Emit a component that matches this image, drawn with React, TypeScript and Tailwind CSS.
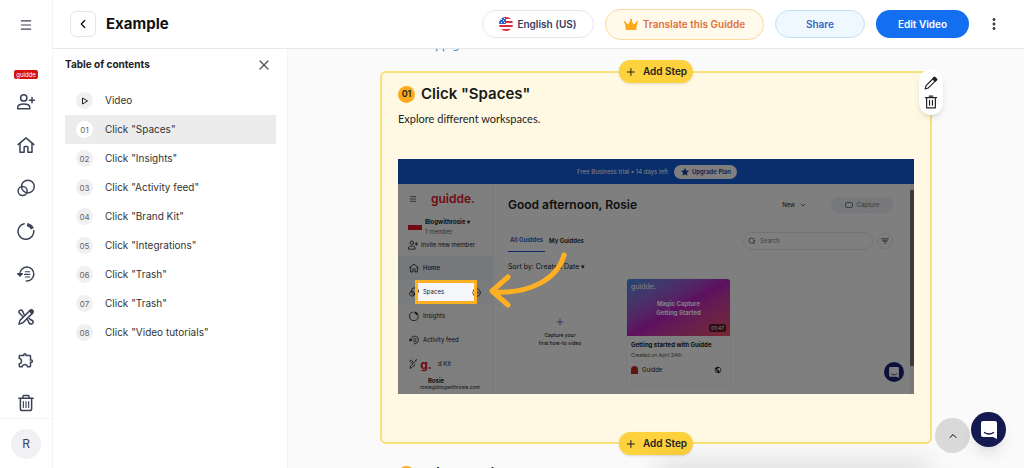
import type { ReactNode } from "react";
import { ChevronDown, ChevronLeft, ChevronUp, CirclePlus, Menu, Plus, Search, X } from "lucide-react";
import { MdMoreVert, MdOutlineExtension, MdStar, MdFilterList, MdPublic } from "react-icons/md";

const steps = [
  'Click "Spaces"',
  'Click "Insights"',
  'Click "Activity feed"',
  'Click "Brand Kit"',
  'Click "Integrations"',
  'Click "Trash"',
  'Click "Trash"',
  'Click "Video tutorials"',
];

const pad = (n: number) => String(n).padStart(2, "0");

function Line({ children, className = "size-[18px]" }: { children: ReactNode; className?: string }) {
  return (
    <svg
      viewBox="0 0 24 24"
      fill="none"
      stroke="currentColor"
      strokeWidth="2"
      strokeLinecap="round"
      strokeLinejoin="round"
      className={className}
      aria-hidden="true"
    >
      {children}
    </svg>
  );
}

const UserAddIcon = ({ className }: { className?: string }) => (
  <Line className={className}>
    <circle cx="9" cy="6.5" r="4.2" />
    <path d="M1 21v-2c0-3 3.600-4.500 8-4.500s8 1.500 8 4.500v2z" />
    <path d="M20 6v7M16.500 9.500h7" />
  </Line>
);

const HomeIcon = ({ className }: { className?: string }) => (
  <Line className={className}>
    <path d="M1.500 11.500 12 2.500l10.500 9" />
    <path d="M4 9.500V21.500h5.500V15a1 1 0 0 1 1-1h3a1 1 0 0 1 1 1v6.500H20V9.500" />
  </Line>
);

const SpacesIcon = ({ className }: { className?: string }) => (
  <Line className={className}>
    <circle cx="14.500" cy="10" r="8.500" />
    <circle cx="7.500" cy="16" r="6" />
  </Line>
);

const InsightsIcon = ({ className }: { className?: string }) => (
  <Line className={className}>
    <path d="M9.500 2.300A10.500 10.500 0 1 0 22.300 11.500" />
    <path d="M13.500 3.500a9.500 9.500 0 0 1 7 5.500" strokeWidth="4.500" strokeLinecap="butt" />
  </Line>
);

const ActivityIcon = ({ className }: { className?: string }) => (
  <Line className={className}>
    <path d="M4 12a9.200 9.200 0 1 1 8.500 9.200" />
    <path d="M1 11.500h6l-3 3z" fill="currentColor" />
    <path d="M11 9h6M10 12.500h7M11 16h6" strokeWidth="1.500" />
  </Line>
);

const BrandIcon = ({ className }: { className?: string }) => (
  <Line className={className}>
    <path d="M2.500 21.500 4 16.500 17.500 3a2.500 2.500 0 0 1 3.500 3.500L7.500 20z" />
    <path d="m16.500 4 3.500 3.500 1.500-3-2-2z" fill="currentColor" />
    <path d="M9.500 8.500C8 7 8.500 5 7 3.500S3 3 2.500 4.500s1 2.500 2 3.500 2 2 3 3" />
    <path d="M14 15.500c1.500 1.500 1 3.500 2.500 5s4.500 1 5-1-1-3-2.500-3.500-2-1.500-2.500-2" />
  </Line>
);

const TrashIcon = ({ className }: { className?: string }) => (
  <Line className={className}>
    <path d="M2.500 5.500h19M8 5V3a1 1 0 0 1 1-1h6a1 1 0 0 1 1 1v2" />
    <path d="M4.500 6v13.500a2.500 2.500 0 0 0 2.500 2.500h10a2.500 2.500 0 0 0 2.500-2.500V6" />
    <path d="M8.500 10v8M12 10v8M15.500 10v8" strokeWidth="1.500" />
  </Line>
);

const navItems = [
  { label: "Invite", icon: <UserAddIcon /> },
  { label: "Home", icon: <HomeIcon /> },
  { label: "Spaces", icon: <SpacesIcon /> },
  { label: "Insights", icon: <InsightsIcon /> },
  { label: "Activity feed", icon: <ActivityIcon /> },
  { label: "Brand Kit", icon: <BrandIcon /> },
  { label: "Integrations", icon: <MdOutlineExtension className="size-[18px]" /> },
  { label: "Trash", icon: <TrashIcon /> },
];

function Sidebar() {
  return (
    <aside className="flex w-[53px] shrink-0 flex-col items-center border-r border-gray-100 bg-white text-[#3c4257]">
      <button aria-label="Menu" className="flex h-[49px] w-full items-center justify-center">
        <Menu className="size-[14px]" />
      </button>
      <span className="mt-[21px] rounded-xs bg-[#d5100f] px-0.5 text-[6px] leading-[9px] text-white">guidde</span>
      <nav className="mt-[14px] flex flex-col gap-[25px]">
        {navItems.map((item) => (
          <button key={item.label} aria-label={item.label} className="block">
            {item.icon}
          </button>
        ))}
      </nav>
      <div className="mt-auto flex h-[50px] w-full items-center justify-center border-t border-gray-100">
        <button className="size-[30px] rounded-full bg-[#f1f1f5] text-xs">R</button>
      </div>
    </aside>
  );
}

function UsFlag() {
  return (
    <svg viewBox="0 0 14 14" className="size-[14px] rounded-full" aria-hidden="true">
      <path fill="#fff" d="M0 0h14v14H0z" />
      <path fill="#e0293c" d="M0 0h14v2H0zM0 4h14v2H0zM0 8h14v2H0zM0 12h14v2H0z" />
      <path fill="#2f62c9" d="M0 0h7v7H0z" />
      <path fill="#fff" d="M2 2h1v1H2zM4 3h1v1H4zM2 5h1v1H2zM5 5h1v1H5zM5 1h1v1H5z" />
    </svg>
  );
}

function Header() {
  return (
    <header className="z-10 flex h-[49px] shrink-0 items-center border-b border-gray-200 bg-white pr-[21px] pl-[17px]">
      <button
        aria-label="Back"
        className="flex size-[26px] items-center justify-center rounded-md border border-gray-200"
      >
        <ChevronLeft className="size-[14px]" />
      </button>
      <h1 className="ml-[10px] text-[15px] font-bold text-[#111]">Example</h1>
      <div className="ml-auto flex items-center gap-[11px] text-[10px] font-semibold">
        <button className="flex h-7 w-28 items-center justify-center gap-1 rounded-full border border-gray-200 text-[#3a3a5c]">
          <UsFlag />
          English (US)
        </button>
        <button className="flex h-[31px] w-[159px] items-center justify-center gap-[5px] rounded-full border border-[#f8d79b] bg-[#fffaec] text-[#e2703a]">
          <svg viewBox="0 0 14 11" className="h-[11px] w-[14px]" fill="#fba819" aria-hidden="true">
            <path d="M2 11 .8 4.200a1 1 0 1 1 1-.6L4.300 5.600 6.300 2a1.200 1.200 0 1 1 1.400 0l2 3.600 2.500-2a1 1 0 1 1 1 .6L12 11z" />
          </svg>
          Translate this Guidde
        </button>
        <button className="h-7 w-[90px] rounded-full border border-[#c9e3f3] bg-[#eef8fe] text-[#3566c4]">Share</button>
        <button className="h-7 w-[93px] rounded-full bg-[#146ef0] text-white">Edit Video</button>
        <button aria-label="More" className="ml-[5px]">
          <MdMoreVert className="size-[18px] text-[#444]" />
        </button>
      </div>
    </header>
  );
}

function Contents() {
  return (
    <section className="flex w-[235px] shrink-0 flex-col border-r border-gray-100 bg-white pr-[11px] pl-3">
      <div className="flex h-[31px] items-center justify-between pr-1 text-[#222]">
        <h2 className="text-[10px] font-bold">Table of contents</h2>
        <button aria-label="Close">
          <X className="size-4 text-[#555]" />
        </button>
      </div>
      <ul className="mt-[6px] text-[10px] text-[#333]">
        <li>
          <a href="#video" className="flex h-[29px] items-center gap-3 pl-[11px]">
            <span className="flex size-[17px] items-center justify-center rounded-full bg-[#f0f0f1]">
              <svg viewBox="0 0 8 8" className="size-2" fill="none" stroke="#222" strokeLinejoin="round">
                <path d="M1.500 1v6l5-3z" />
              </svg>
            </span>
            Video
          </a>
        </li>
        {steps.map((title, i) => (
          <li key={i}>
            <a
              href={`#step-${i + 1}`}
              className={`flex h-[29px] items-center gap-3 pl-[11px] ${i === 0 ? "bg-[#ececed]" : ""}`}
            >
              <span
                className={`flex size-[17px] items-center justify-center rounded-full text-[8px] text-[#666] ${
                  i === 0 ? "bg-white" : "bg-[#f0f0f1]"
                }`}
              >
                {pad(i + 1)}
              </span>
              {title}
            </a>
          </li>
        ))}
      </ul>
    </section>
  );
}

const appNav = [
  { label: "Home", icon: <HomeIcon className="size-[10px]" /> },
  { label: "Spaces", icon: <SpacesIcon className="size-[10px]" /> },
  { label: "Insights", icon: <InsightsIcon className="size-[10px]" /> },
  { label: "Activity feed", icon: <ActivityIcon className="size-[10px]" /> },
];

function ChatIcon({ className }: { className?: string }) {
  return (
    <svg viewBox="0 0 16 18" className={className} aria-hidden="true">
      <path fill="#fff" d="M2 0h12a2 2 0 0 1 2 2v16l-4-2H2a2 2 0 0 1-2-2V2a2 2 0 0 1 2-2z" />
      <path d="M3.500 11.500c2.500 2 6.500 2 9 0" fill="none" stroke="#14194f" strokeWidth="1.300" strokeLinecap="round" />
    </svg>
  );
}

/* Dimmed capture of the app with the clicked menu item lit up */
function Capture() {
  return (
    <figure className="relative flex aspect-[516/235] flex-col overflow-hidden bg-white text-[6px] leading-[10px] text-[#222]">
      <div className="flex h-[25px] shrink-0 items-center justify-center gap-[6px] bg-[#145ad6] pl-[2px] text-white">
        Free Business trial • 14 days left
        <span className="flex h-[14px] items-center gap-0.5 rounded-full bg-white px-[6px] font-semibold text-[#1c3f9c]">
          <MdStar className="size-[10px]" />
          Upgrade Plan
        </span>
      </div>
      <div className="flex min-h-0 flex-1">
        <div className="flex w-[96px] shrink-0 flex-col border-r border-gray-100 bg-[#fcfcfd]">
          <div className="flex h-[30px] items-center gap-[14px] pl-[11px]">
            <Menu className="size-2" />
            <span className="text-[12px] font-semibold text-[#e0162b]">guidde.</span>
          </div>
          <div className="flex items-center gap-[3px] pt-[3px] pl-[10px]">
            <span className="h-[5px] w-[14px] bg-[#e0162b]" />
            <div>
              <p className="font-bold">Blogwithrosie ▾</p>
              <p className="text-[#666]">1 member</p>
            </div>
          </div>
          <div className="flex h-4 items-center gap-[3px] pl-[10px]">
            <UserAddIcon className="size-[10px]" />
            Invite new member
          </div>
          <div className="mt-[3px]">
            {appNav.map((item, i) => (
              <div
                key={item.label}
                className={`flex h-6 items-center gap-1 pr-3 pl-[11px] ${i === 0 ? "bg-[#eef0f6] font-medium" : ""} ${
                  i === 1 ? "bg-[#f5f6fa]" : ""
                }`}
              >
                {item.icon}
                {item.label}
                {i === 1 && <CirclePlus className="ml-auto size-[9px]" />}
              </div>
            ))}
            {/* the recorder bubble hides the start of this label */}
            <div className="flex h-6 items-center gap-[19px] pl-[11px]">
              <BrandIcon className="size-[10px]" />d Kit
            </div>
          </div>
        </div>
        <div className="min-w-0 flex-1 pt-[13px] pr-[17px] pl-[14px]">
          <div className="flex items-center gap-5">
            <h3 className="mr-auto text-[12px] leading-4 font-semibold">Good afternoon, Rosie</h3>
            <span className="flex items-center gap-1 pr-1">
              New <ChevronDown className="size-2" />
            </span>
            <span className="flex h-4 w-[62px] items-center justify-center gap-1 rounded-full bg-[#eef0f6] text-[#777]">
              <span className="h-[6px] w-2 rounded-xs border border-[#777]" />
              Capture
            </span>
          </div>
          <div className="mt-4 flex items-center">
            <span className="border-b border-[#1259cf] px-[2px] pt-[6px] pb-[6px] font-semibold text-[#1259cf]">
              All Guiddes
            </span>
            <span className="ml-1 font-semibold">My Guiddes</span>
            <span className="ml-auto flex h-[18px] w-[130px] items-center gap-1 rounded-full border border-gray-200 px-1 text-[#888]">
              <Search className="size-2 text-[#333]" />
              Search
            </span>
            <span className="ml-1 flex size-4 items-center justify-center rounded-full border border-gray-200">
              <MdFilterList className="size-[10px]" />
            </span>
          </div>
          <p className="mt-[10px] text-[7px]">Sort by: Created Date ▾</p>
          <div className="mt-[6px] flex gap-[14px]">
            <div className="flex h-[108px] w-[104px] flex-col items-center justify-center text-center text-[5px] leading-[8px] font-medium">
              <Plus className="mb-1 size-[10px] text-[#5b54c8]" />
              Capture your
              <br />
              first how-to video
            </div>
            <div className="h-[108px] w-[105px] overflow-hidden rounded-sm border border-gray-100">
              <div className="flex h-[57px] flex-col justify-between bg-linear-to-br from-[#2f8ee6] via-[#b81fc0] to-[#f0505e] px-1 pt-1 pb-1 text-white">
                <span className="text-[7px] leading-[8px]">guidde.</span>
                <span className="text-center text-[6px] leading-[9px] font-bold">
                  Magic Capture
                  <br />
                  Getting Started
                </span>
                <span className="self-end rounded-xs bg-black/60 px-0.5 text-[5px] leading-[8px]">01:47</span>
              </div>
              <div className="px-1 pt-1 text-[5px]">
                <p className="text-[6px] font-bold">Getting started with Guidde</p>
                <p className="text-[#555]">Created on April 24th</p>
                <p className="flex items-center gap-1 pt-[5px] text-[6px]">
                  <span className="h-2 w-[7px] rounded-t-full bg-[#c12a2a]" />
                  Guidde
                  <MdPublic className="mr-1 ml-auto size-2" />
                </p>
              </div>
            </div>
          </div>
        </div>
        <div className="flex w-1 flex-col bg-[#f0f0f0] py-[6px]">
          <span className="h-[176px] bg-[#777]" />
        </div>
      </div>

      <span className="absolute bottom-[17px] left-[17px] flex size-[22px] items-center justify-center rounded-full bg-white pb-[3px] text-[12px] font-bold text-[#e0162b]">
        g.
      </span>
      <div className="absolute bottom-[3px] left-[22px] text-[5px] leading-[7px]">
        <p className="pl-[8px] text-[6px] font-bold">Rosie</p>
        <p>rosie@blogwithrosie.com</p>
      </div>
      <span className="absolute right-[10px] bottom-[12px] flex size-5 items-center justify-center rounded-full bg-[#1b1f78]">
        <ChatIcon className="h-[11px] w-[10px]" />
      </span>
      <span className="absolute top-[121px] left-[17px] h-[24px] w-[62px] border-[3px] border-[#fdb022] shadow-[0_0_0_600px_rgba(0,0,0,0.5)]" />
      <svg
        viewBox="0 0 84 60"
        className="absolute top-[91px] left-[88px] h-[60px] w-[84px]"
        fill="none"
        stroke="#fdb022"
        strokeWidth="5"
        strokeLinecap="round"
        strokeLinejoin="round"
        aria-hidden="true"
      >
        <path d="M78 5C71 30 43 44 7 42M22 27 6 41l16 14" />
      </svg>
    </figure>
  );
}

function AddStep({ className }: { className: string }) {
  return (
    <button
      className={`absolute left-1/2 flex h-[23px] -translate-x-1/2 items-center gap-[6px] rounded-full bg-[#fdd23c] px-[6px] text-[10px] font-semibold whitespace-nowrap text-[#222] shadow ${className}`}
    >
      <Plus className="size-3" />
      Add Step
    </button>
  );
}

function StepTitle({ index }: { index: number }) {
  return (
    <div className="flex items-center gap-[6px]">
      <span className="flex size-[17px] items-center justify-center rounded-full bg-[#fbab1d] text-[9px] font-semibold text-[#222]">
        {pad(index + 1)}
      </span>
      <h2 className="text-[15px] leading-5 font-semibold text-[#1a1a1a]">{steps[index]}</h2>
    </div>
  );
}

function StepCard() {
  return (
    <article className="relative rounded-md border-2 border-[#f8e07a] bg-[#fff9e3] px-4 pt-[11px] pb-12">
      <StepTitle index={0} />
      <p className="mt-[6px] mb-[31px] font-[Lato] text-[11px] leading-[18px] text-[#222]">
        Explore different workspaces.
      </p>
      <Capture />
      <AddStep className="-top-[13px]" />
      <AddStep className="-bottom-[13px]" />
      <div className="absolute -top-1 -right-[13px] flex h-[46px] w-6 flex-col items-center justify-center gap-[5px] rounded-full bg-white text-[#222] shadow-md">
        <button aria-label="Edit step">
          <Line className="size-[14px]">
            <path d="m2 22 1.500-5.500L17 3a1.500 1.500 0 0 1 2 0l2 2a1.500 1.500 0 0 1 0 2L7.500 20.500z" />
            <path d="m15 5 4 4 3-3-4-4z" fill="currentColor" />
          </Line>
        </button>
        <button aria-label="Delete step">
          <Line className="size-[14px]">
            <path d="M2.500 4.500h19M9 2h6M4.500 5v17h15V5M9.500 9v8.500M14.500 9v8.500" />
          </Line>
        </button>
      </div>
    </article>
  );
}

export default function App() {
  return (
    <div className="flex h-screen overflow-hidden bg-white font-[Inter,sans-serif]">
      <Sidebar />
      <div className="flex min-w-0 flex-1 flex-col">
        <Header />
        <div className="flex min-h-0 flex-1">
          <Contents />
          <main className="min-w-0 flex-1 overflow-hidden bg-[#fafafa]">
            <div className="mx-auto max-w-[552px]">
              <a href="#app" className="-mt-3 block pl-[18px] text-[11px] leading-4 font-medium text-[#1d8fd0]">
                Go to app.guidde.com
              </a>
              <div className="mt-[18px]">
                <StepCard />
              </div>
              <div className="mt-[7px] px-[18px] pt-[13px]">
                <StepTitle index={1} />
              </div>
            </div>
          </main>
        </div>
      </div>

      <div className="pointer-events-none fixed -bottom-5 left-[64%] h-7 w-[27%] rounded-full bg-black/10 blur-md" />
      <button
        aria-label="Back to top"
        className="fixed right-[54px] bottom-[15px] flex size-[35px] items-center justify-center rounded-full bg-[#d9d9da]"
      >
        <ChevronUp className="size-3" />
      </button>
      <button
        aria-label="Open chat"
        className="fixed right-[18px] bottom-[21px] flex size-[35px] items-center justify-center rounded-full bg-[#14194f] shadow-lg"
      >
        <ChatIcon className="h-[18px] w-4" />
      </button>
    </div>
  );
}
